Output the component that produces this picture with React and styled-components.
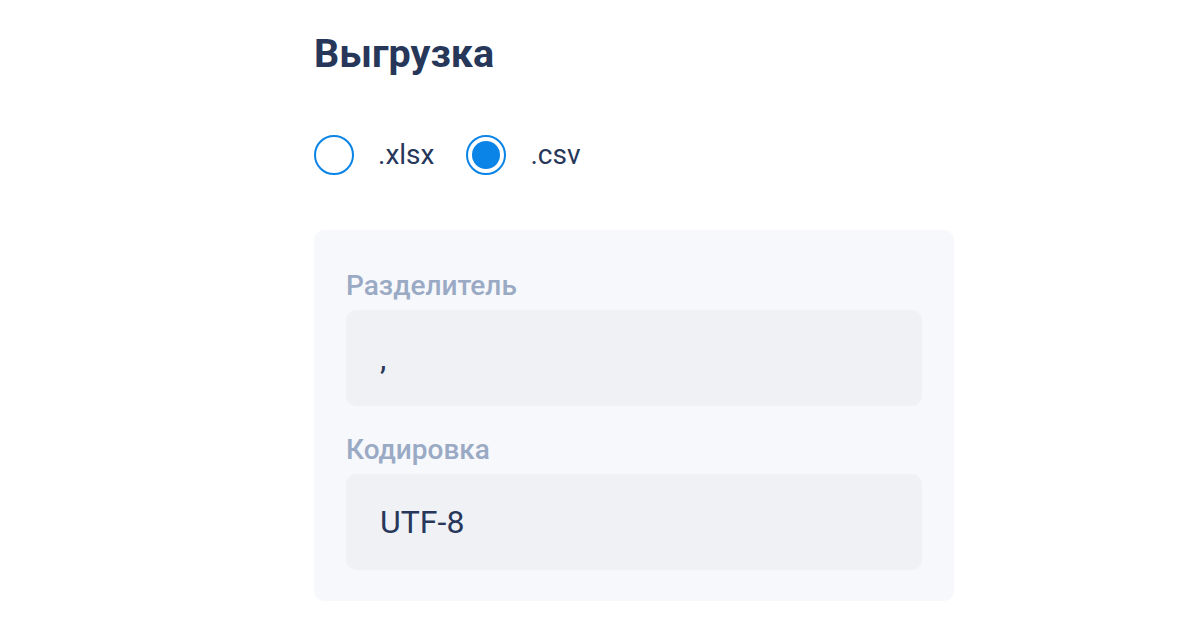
import React, { useState } from "react";
import styled, { createGlobalStyle } from "styled-components";

const Global = createGlobalStyle`
  html, body { margin: 0; padding: 0; background: #ffffff; }
  body { font-family: Roboto, "Noto Sans", sans-serif; }
`;

const Page = styled.div`
  padding: 30px 0 0 314px;
  width: 640px;
`;

const Title = styled.h1`
  margin: 0;
  font-size: 39.5px;
  line-height: 48px;
  font-weight: 700;
  color: #27375a;
`;

const RadioGroup = styled.div`
  display: flex;
  align-items: center;
  gap: 32px;
  margin-top: 57px;
`;

const RadioItem = styled.label`
  display: flex;
  align-items: center;
  gap: 24px;
  cursor: pointer;
  font-size: 28px;
  line-height: 40px;
  color: #27375a;
`;

const RadioCircle = styled.span`
  width: 40px;
  height: 40px;
  box-sizing: border-box;
  border-radius: 50%;
  border: 2px solid #0a84e6;
  display: flex;
  align-items: center;
  justify-content: center;
  &::after {
    content: "";
    width: 28px;
    height: 28px;
    border-radius: 50%;
    background: #0a84e6;
    display: ${(p) => (p.$checked ? "block" : "none")};
  }
`;

const Panel = styled.div`
  margin-top: 55px;
  background: #f7f8fb;
  border-radius: 10px;
  padding: 40px 32px 31px;
  display: flex;
  flex-direction: column;
`;

const FieldLabel = styled.div`
  font-size: 28px;
  font-weight: 500;
  line-height: 32px;
  color: #9aaac4;
  margin-top: ${(p) => (p.$first ? "0" : "28px")};
  margin-bottom: 8px;
`;

const Field = styled.div`
  height: 96px;
  border-radius: 10px;
  background: #eff1f5;
  display: flex;
  align-items: center;
  padding: 0 34px;
  font-size: 32px;
  color: #27375a;
`;

export default function App() {
  const [fmt, setFmt] = useState("csv");
  return (
    <>
      <Global />
      <Page>
        <Title>Выгрузка</Title>
        <RadioGroup>
          <RadioItem onClick={() => setFmt("xlsx")}>
            <RadioCircle $checked={fmt === "xlsx"} />
            .xlsx
          </RadioItem>
          <RadioItem onClick={() => setFmt("csv")}>
            <RadioCircle $checked={fmt === "csv"} />
            .csv
          </RadioItem>
        </RadioGroup>
        <Panel>
          <FieldLabel $first>Разделитель</FieldLabel>
          <Field>,</Field>
          <FieldLabel>Кодировка</FieldLabel>
          <Field>UTF-8</Field>
        </Panel>
      </Page>
    </>
  );
}
